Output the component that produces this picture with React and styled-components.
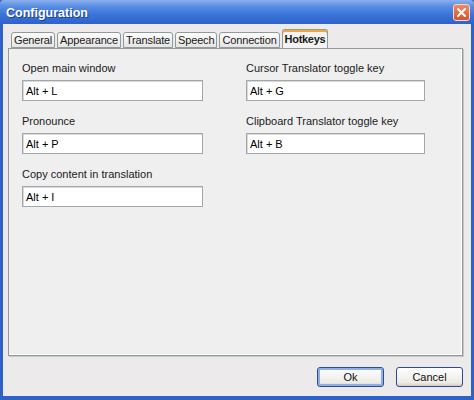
import styled, { createGlobalStyle } from "styled-components"

const Global = createGlobalStyle`
  html, body { margin: 0; padding: 0; background: #fff; }
  body { font-family: "Liberation Sans", Arial, sans-serif; font-size: 11px; color: #000; }
`

const Window = styled.div`
  width: 474px;
  height: 400px;
  box-sizing: border-box;
  display: flex;
  flex-direction: column;
  background: #2f62c9;
  padding: 0 3px 4px 3px;
`

const TitleBar = styled.div`
  height: 24px;
  margin: 0 -3px;
  display: flex;
  align-items: center;
  justify-content: space-between;
  padding: 0 4px 0 6px;
  background: linear-gradient(#8db0ec 0%, #5a8fe3 25%, #3b74d9 60%, #2d62ca 100%);
  border-radius: 4px 4px 0 0;
`

const Title = styled.span`
  color: #fff;
  font-weight: bold;
  font-size: 12.5px;
  text-shadow: 1px 1px 0 #1d3f8a;
  margin-top: 1px;
`

const Close = styled.div`
  width: 15px;
  height: 15px;
  border: 1px solid #f3d9cc;
  border-radius: 3px;
  background: linear-gradient(#f08a63, #d8542c);
  display: flex;
  align-items: center;
  justify-content: center;
`

const Body = styled.div`
  flex: 1;
  background: #eceaeb;
  display: flex;
  flex-direction: column;
  padding: 5px 8px 0 5px;
`

const TabStrip = styled.div`
  display: flex;
  align-items: flex-end;
  gap: 2px;
  padding-left: 3px;
  height: 19px;
  position: relative;
  z-index: 1;
`

const Tab = styled.div`
  height: ${p => (p.$active ? "19px" : "16px")};
  box-sizing: border-box;
  padding: 0 2px;
  display: flex;
  align-items: center;
  border: 1px solid #919b9c;
  border-bottom: ${p => (p.$active ? "none" : "1px solid #919b9c")};
  border-radius: 3px 3px 0 0;
  background: ${p => (p.$active ? "#f4f3f4" : "linear-gradient(#fcfcfc, #e6e5e4)")};
  box-shadow: ${p => (p.$active ? "inset 0 2px 0 #f3a73a" : "none")};
  font-weight: ${p => (p.$active ? "bold" : "normal")};
  letter-spacing: ${p => (p.$active ? "-0.3px" : "-0.15px")};
  color: #1a1a1a;
`

const Panel = styled.div`
  height: 308px;
  box-sizing: border-box;
  border: 1px solid #919b9c;
  background: #f0eff0;
  box-shadow: inset -1px -1px 0 #fff, 1px 1px 0 #c9c7c6;
  padding: 13px 13px;
  display: grid;
  grid-template-columns: 181px 179px;
  column-gap: 43px;
  align-content: start;
`

const Column = styled.div`
  display: flex;
  flex-direction: column;
  gap: 14px;
`

const Field = styled.div`
  display: flex;
  flex-direction: column;
  gap: 5px;
`

const Label = styled.label`
  line-height: 13px;
  height: 13px;
  color: #1a1a1a;
`

const Input = styled.div`
  height: 21px;
  box-sizing: border-box;
  border: 1px solid #a3a7ad;
  box-shadow: inset 1px 1px 0 #d9d9d9;
  background: #fff;
  padding: 0 3px;
  display: flex;
  align-items: center;
  color: #000;
`

const Footer = styled.div`
  display: flex;
  justify-content: flex-end;
  gap: 12px;
  padding: 11px 0 0 0;
`

const Button = styled.button`
  width: 67px;
  height: 20px;
  font-family: inherit;
  font-size: 11px;
  color: #111;
  border: 1px solid #2c4d8f;
  border-radius: 3px;
  background: linear-gradient(#ffffff, #ecebe6 80%, #d6d0c5);
  box-shadow: ${p => (p.$primary ? "inset 0 0 0 2px #8eaee8" : "inset 0 -1px 0 #d6d0c5")};
  padding: 0;
`

const tabs = ["General", "Appearance", "Translate", "Speech", "Connection", "Hotkeys"]

const left = [
  ["Open main window", "Alt + L"],
  ["Pronounce", "Alt + P"],
  ["Copy content in translation", "Alt + I"],
]

const right = [
  ["Cursor Translator toggle key", "Alt + G"],
  ["Clipboard Translator toggle key", "Alt + B"],
]

const App = () => {
  return (
    <>
      <Global />
      <Window>
        <TitleBar>
          <Title>Configuration</Title>
          <Close>
            <svg width="11" height="11" viewBox="0 0 11 11">
              <path d="M2 2 L9 9 M9 2 L2 9" stroke="#fff" strokeWidth="2" strokeLinecap="round" />
            </svg>
          </Close>
        </TitleBar>
        <Body>
          <TabStrip>
            {tabs.map(t => (
              <Tab key={t} $active={t === "Hotkeys"}>{t}</Tab>
            ))}
          </TabStrip>
          <Panel>
            <Column>
              {left.map(([l, v]) => (
                <Field key={l}>
                  <Label>{l}</Label>
                  <Input>{v}</Input>
                </Field>
              ))}
            </Column>
            <Column>
              {right.map(([l, v]) => (
                <Field key={l}>
                  <Label>{l}</Label>
                  <Input>{v}</Input>
                </Field>
              ))}
            </Column>
          </Panel>
          <Footer>
            <Button $primary>Ok</Button>
            <Button>Cancel</Button>
          </Footer>
        </Body>
      </Window>
    </>
  )
}

export default App
